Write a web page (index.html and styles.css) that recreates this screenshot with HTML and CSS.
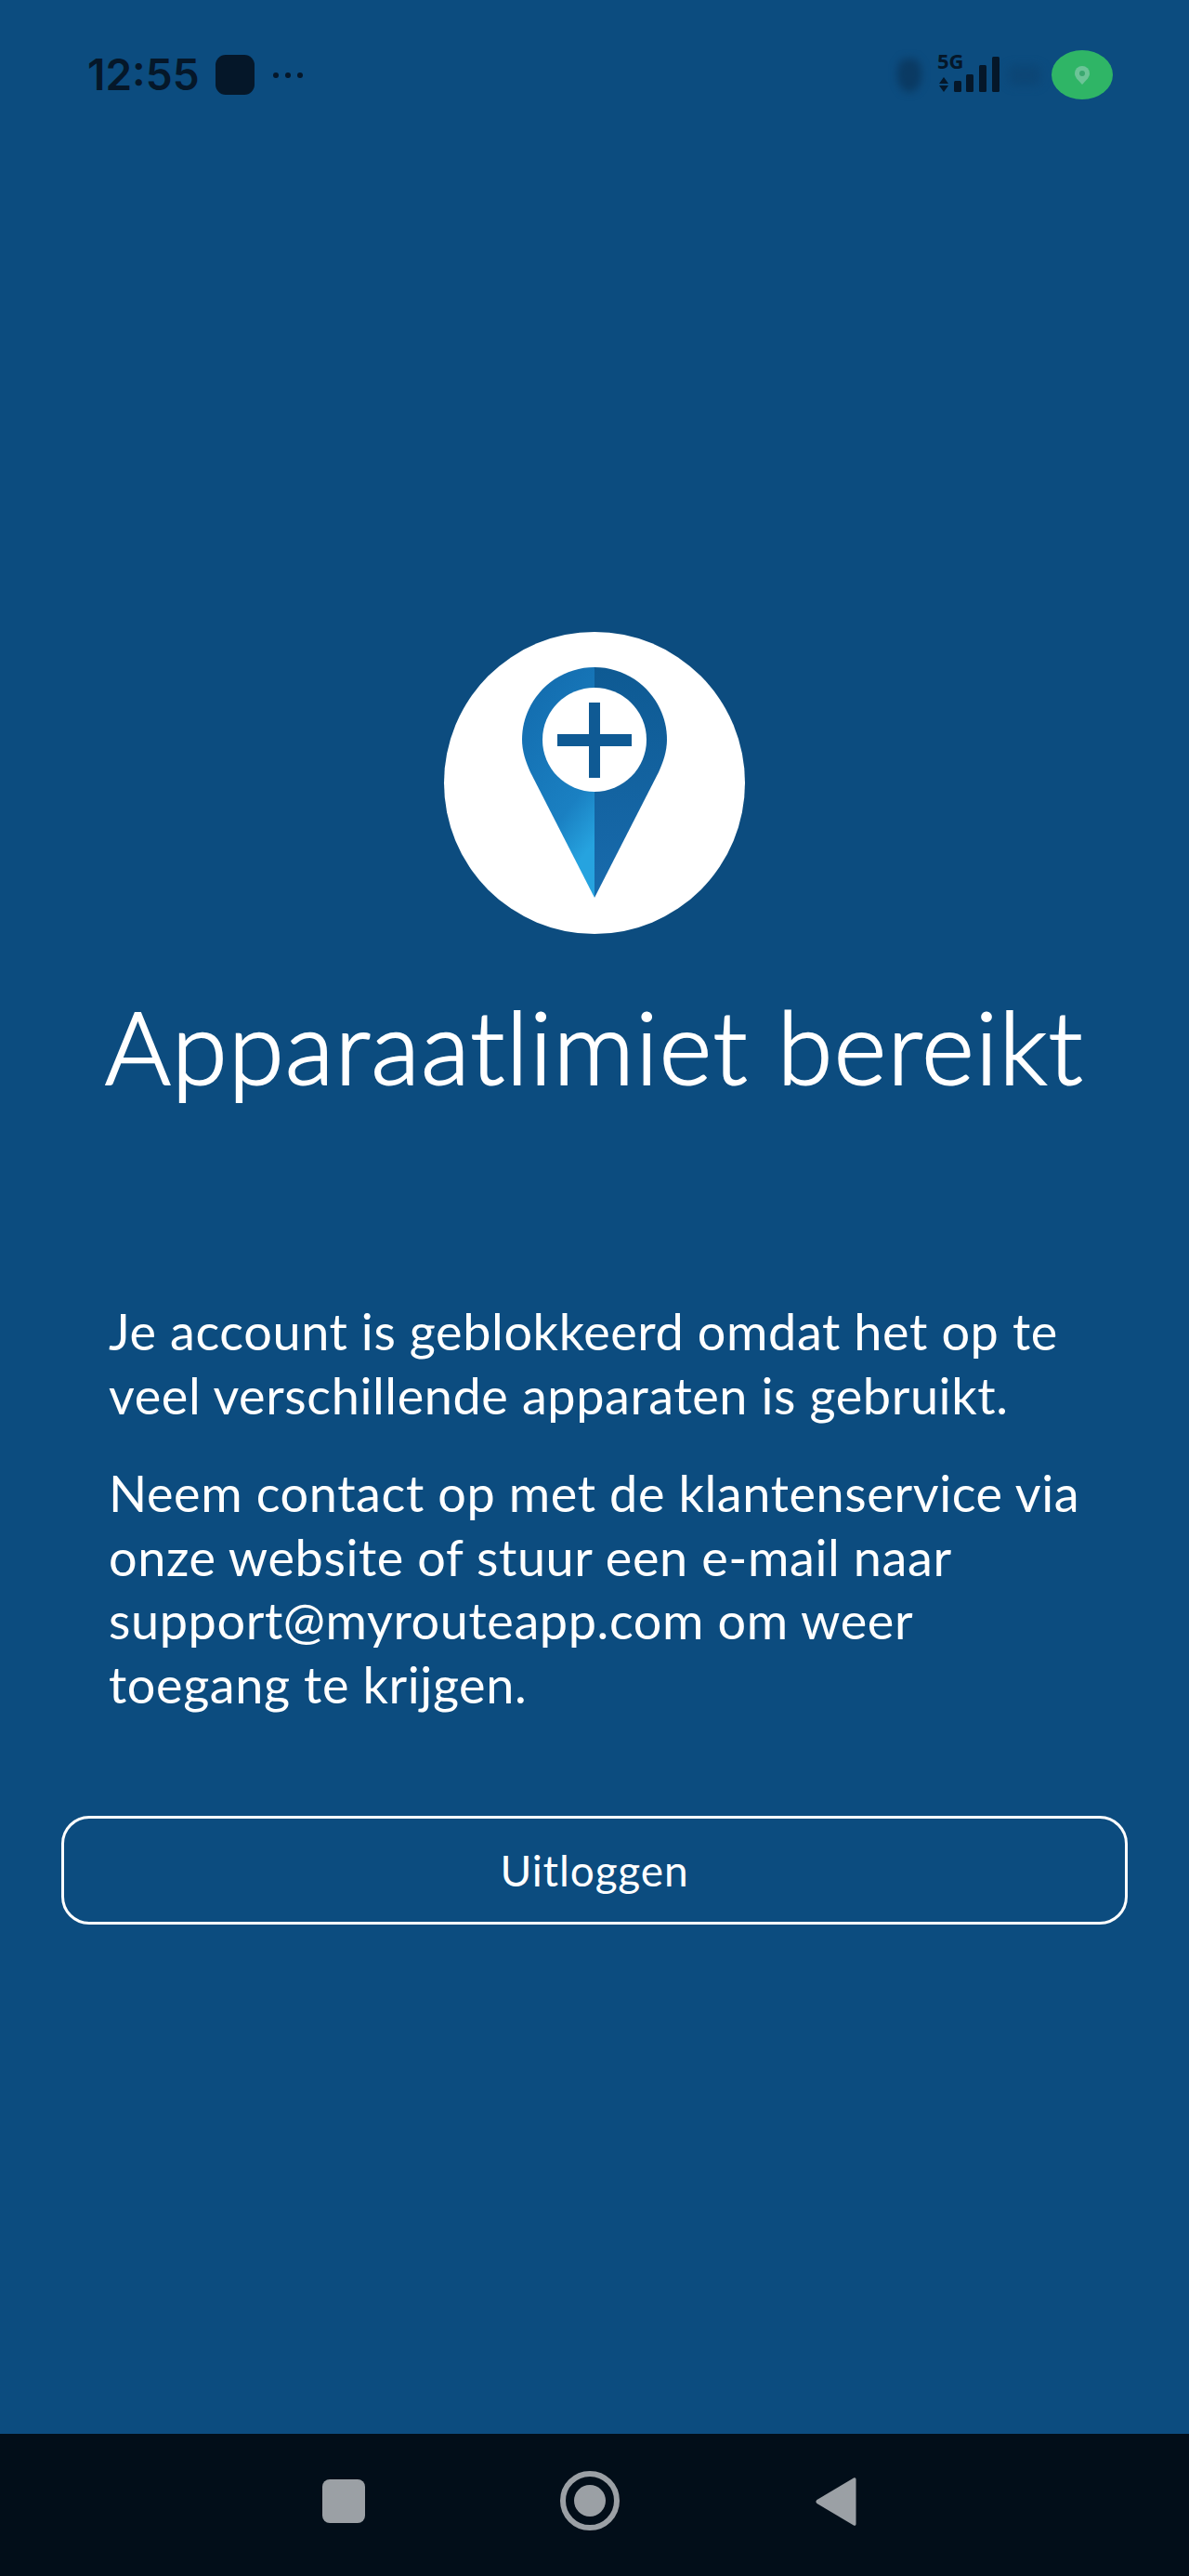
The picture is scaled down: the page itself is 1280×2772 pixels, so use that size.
FILE: index.html
```html
<!DOCTYPE html>
<html lang="nl">
  <head>
    <meta charset="UTF-8" />
    <meta name="viewport" content="width=device-width, initial-scale=1.0" />
    <title>Apparaatlimiet bereikt</title>
    <link rel="stylesheet" href="styles.css">
  </head>
  <body>

    <div class="status-bar">
      <div class="status-left">
        <span class="clock">12:55</span>
        <span class="app-square"></span>
        <span class="dots"><i></i><i></i><i></i></span>
      </div>
      <div class="status-right">
        <span class="blur-shield"></span>
        <svg class="signal" width="70" height="61" viewBox="0 0 70 61">
          <text x="0" y="24" class="signal-label">5G</text>
          <path d="M7 33l-5 7h10zM7 49l-5-7h10z" fill="#051729" />
          <rect x="18" y="37" width="8" height="12" rx="1.500" fill="#051729" />
          <rect x="31" y="30" width="8" height="19" rx="1.500" fill="#051729" />
          <rect x="45" y="20" width="8" height="29" rx="1.500" fill="#051729" />
          <rect x="59" y="11" width="8" height="38" rx="1.500" fill="#051729" />
        </svg>
        <span class="blur-battery"></span>
        <span class="location-pill">
          <svg width="18" height="22" viewBox="0 0 18 22">
            <path d="M9 1a8 8 0 0 0-8 8c0 2 .8 3.600 2 5.500L9 21l6-6.500c1.200-1.900 2-3.500 2-5.500a8 8 0 0 0-8-8z" fill="#6cc497" />
            <circle cx="9" cy="9" r="3" fill="#3aa76f" />
          </svg>
        </span>
      </div>
    </div>

    <main class="content">
      <div class="logo">
        <svg width="156" height="248" viewBox="0 0 156 248">
          <defs>
            <linearGradient id="pinLeft" x1="0" y1="0" x2="0.4" y2="1">
              <stop offset="0" stop-color="#1269ab" />
              <stop offset="0.75" stop-color="#1a80c2" />
              <stop offset="1" stop-color="#26a3df" />
            </linearGradient>
            <linearGradient id="pinRight" x1="0" y1="0" x2="0" y2="1">
              <stop offset="0" stop-color="#0e5a93" />
              <stop offset="1" stop-color="#186bad" />
            </linearGradient>
          </defs>
          <path d="M78 0C35 0 0 35 0 78c0 12 4 24 9 35l69 135z" fill="url(#pinLeft)" />
          <path d="M78 0c43 0 78 35 78 78 0 12-4 24-9 35L78 248z" fill="url(#pinRight)" />
          <circle cx="78" cy="78" r="56" fill="#fff" />
          <rect x="38" y="72" width="80" height="13" fill="#0f5a94" />
          <rect x="72" y="38" width="12" height="81" fill="#0f5a94" />
        </svg>
      </div>

      <h1 class="title">Apparaatlimiet bereikt</h1>

      <div class="message">
        <p>Je account is geblokkeerd omdat het op te veel verschillende apparaten is gebruikt.</p>
        <p>Neem contact op met de klantenservice via onze website of stuur een e-mail naar support@myrouteapp.com om weer toegang te krijgen.</p>
      </div>

      <button class="logout-button">Uitloggen</button>
    </main>

    <nav class="nav-bar">
      <span class="nav-square"></span>
      <span class="nav-circle"><i></i></span>
      <svg width="44" height="54" viewBox="0 0 44 54">
        <path d="M41 1.500L1.500 25c-1.500 1-1.500 3 0 4L41 52.500c1.500.8 2.500 0 2.500-1.500V3c0-1.500-1-2.300-2.500-1.500z" fill="#9ba0a5" />
      </svg>
    </nav>

  </body>
</html>
```

FILE: styles.css
```css
body {
  margin: 0;
  height: 2772px;
  display: flex;
  flex-direction: column;
  background-color: #0c4c7f;
  font-family: Lato, "Noto Sans", sans-serif;
  color: white;
  overflow: hidden;
}

/* status bar */
.status-bar {
  height: 160px;
  display: flex;
  justify-content: space-between;
  align-items: flex-start;
  padding: 54px 82px 0 94px;
  box-sizing: border-box;
  flex-shrink: 0;
}
.status-left {
  display: flex;
  align-items: center;
  height: 53px;
}
.clock {
  font-family: Inter, sans-serif;
  font-size: 46px;
  font-weight: 600;
  line-height: 53px;
  color: #051729;
}
.app-square {
  width: 42px;
  height: 43px;
  margin-left: 17px;
  border-radius: 11px;
  background-color: #051729;
}
.dots {
  display: flex;
  gap: 7px;
  margin-left: 20px;
}
.dots i {
  width: 6px;
  height: 6px;
  border-radius: 50%;
  background-color: #051729;
}
.status-right {
  display: flex;
  align-items: center;
  height: 53px;
}
.blur-shield {
  width: 26px;
  height: 36px;
  margin-right: 17px;
  border-radius: 40% 40% 50% 50%;
  background-color: #0a3a63;
  filter: blur(4px);
}
.signal {
  flex-shrink: 0;
  overflow: visible;
}
.signal-label {
  font-family: "Noto Sans", sans-serif;
  font-size: 22px;
  font-weight: 700;
  fill: #051729;
}
.blur-battery {
  width: 36px;
  height: 22px;
  margin-left: 6px;
  margin-right: 11px;
  border-radius: 8px;
  background-color: #0c4676;
  filter: blur(5px);
}
.location-pill {
  width: 66px;
  height: 53px;
  border-radius: 50%;
  background-color: #2fb566;
  display: flex;
  align-items: center;
  justify-content: center;
}

/* main */
.content {
  flex: 1;
  display: flex;
  flex-direction: column;
  align-items: center;
  padding: 520px 66px 0;
}
.logo {
  width: 324px;
  height: 325px;
  border-radius: 50%;
  background-color: white;
  display: flex;
  justify-content: center;
  padding-top: 38px;
  box-sizing: border-box;
  flex-shrink: 0;
}
.title {
  margin: 54px 0 0;
  font-size: 108px;
  font-weight: 300;
  -webkit-text-stroke: 2px white;
  letter-spacing: 1.500px;
  line-height: 132px;
  white-space: nowrap;
}
.message {
  align-self: stretch;
  margin-top: 208px;
  padding: 0 51px;
  font-size: 54px;
  letter-spacing: 0.600px;
  line-height: 68.500px;
}
.message p {
  margin: 0 0 37px;
}
.logout-button {
  width: 100%;
  height: 117px;
  margin-top: 70px;
  border: 3px solid white;
  border-radius: 30px;
  background: none;
  font-family: inherit;
  font-size: 46px;
  letter-spacing: 0.900px;
  color: white;
  cursor: pointer;
}

/* android nav */
.nav-bar {
  height: 153px;
  flex-shrink: 0;
  background-color: #020e19;
  display: flex;
  justify-content: center;
  align-items: flex-start;
  padding: 46px 11px 0 0;
  box-sizing: border-box;
}
.nav-square {
  width: 46px;
  height: 47px;
  margin-top: 3px;
  border-radius: 8px;
  background-color: #9ba0a5;
}
.nav-circle {
  width: 64px;
  height: 64px;
  margin: -6px 211px 0 210px;
  box-sizing: border-box;
  border: 6px solid #9ba0a5;
  border-radius: 50%;
  display: flex;
  align-items: center;
  justify-content: center;
}
.nav-circle i {
  width: 34px;
  height: 34px;
  border-radius: 50%;
  background-color: #9ba0a5;
}
```
